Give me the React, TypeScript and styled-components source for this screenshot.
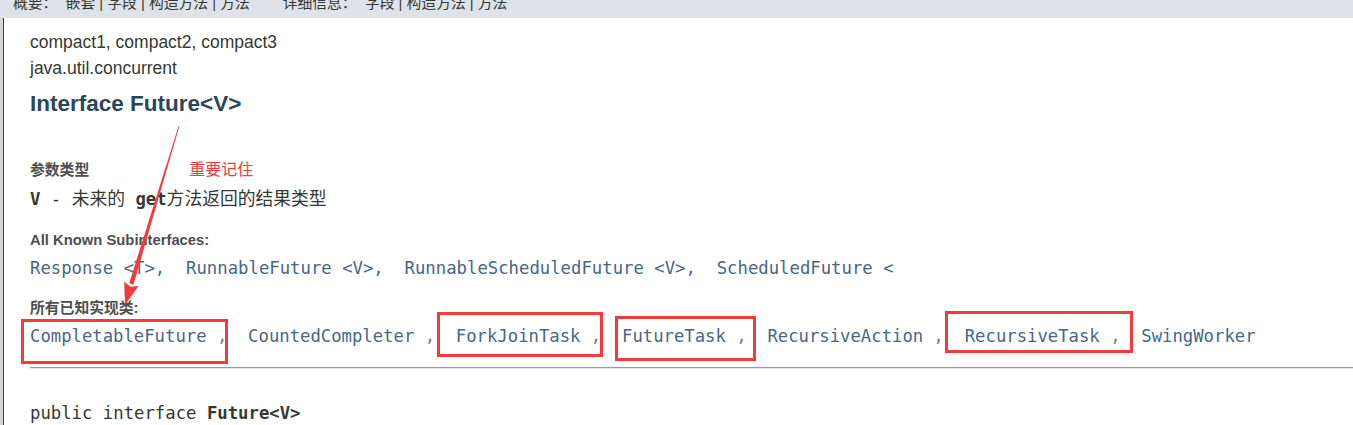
import React from "react";
import styled, { createGlobalStyle } from "styled-components";

const GlobalStyle = createGlobalStyle`
  html, body { margin: 0; padding: 0; background: #ffffff; }
  body {
    font-family: "Liberation Sans", Arial, "Noto Sans CJK SC", sans-serif;
    color: #353833;
  }
`;

const MONO = `"DejaVu Sans Mono", "Noto Sans CJK SC", monospace`;
const RED = "#f23b3b";

const Page = styled.div`
  position: relative;
  width: 1353px;
  height: 425px;
  overflow: hidden;
  display: flex;
  flex-direction: column;
`;

const TopBar = styled.div`
  height: 18px;
  flex-shrink: 0;
  background: #dee3e9;
  overflow: hidden;
  padding-left: 13px;
`;

const NavText = styled.div`
  margin-top: -7px;
  font-size: 14.8px;
  line-height: 20px;
  white-space: pre;
  color: #353833;
`;

const Body = styled.div`
  flex: 1;
  display: flex;
`;

const Edge = styled.div`
  width: 3px;
  flex-shrink: 0;
  background: #d6d6d6;
  border-right: 1px solid #3f3f3f;
`;

const Content = styled.div`
  flex: 1;
  padding-left: 26px;
  display: flex;
  flex-direction: column;
`;

const Line = styled.div<{ $mt: number }>`
  margin-top: ${(p) => p.$mt}px;
  font-size: 17.5px;
  line-height: 26px;
  white-space: nowrap;
`;

const Heading = styled.h1`
  margin: 8px 0 0;
  font-size: 22.5px;
  line-height: 30px;
  font-weight: bold;
  color: #2c4557;
`;

const LabelRow = styled.div<{ $mt: number }>`
  margin-top: ${(p) => p.$mt}px;
  display: flex;
  align-items: center;
  height: 20px;
`;

const Label = styled.div`
  font-size: 14.8px;
  font-weight: bold;
  color: #4e4e4e;
  line-height: 20px;
  white-space: nowrap;
`;

const Note = styled.span`
  margin-left: 100px;
  font-size: 16px;
  color: ${RED};
  line-height: 20px;
`;

const CodeLine = styled.div<{ $mt: number; $link?: boolean }>`
  margin-top: ${(p) => p.$mt}px;
  height: 24px;
  font-family: ${MONO};
  font-size: 17.3px;
  line-height: 24px;
  white-space: pre;
  color: ${(p) => (p.$link ? "#4a6782" : "#353833")};
`;

const Cjk = styled.span`
  font-family: "Noto Sans CJK SC", sans-serif;
  font-size: 17.8px;
  line-height: 1;
`;

const Strong = styled.b`
  font-weight: bold;
  color: #353833;
`;

const ImplRow = styled.div`
  margin-top: 6px;
  display: flex;
  font-family: ${MONO};
  font-size: 17.25px;
  line-height: 24px;
  white-space: pre;
  color: #4a6782;
`;

const Sep = styled.span`
  color: #6d7d8d;
`;

const Rule = styled.hr`
  margin: 19px 0 0;
  height: 0;
  border: none;
  border-top: 1px solid #9a9a9a;
  border-bottom: 1px solid #e9e9e9;
`;

const Overlay = styled.div`
  position: absolute;
  inset: 0;
  pointer-events: none;
`;

const MarkBox = styled.div`
  position: absolute;
  box-sizing: border-box;
  border: 3px solid ${RED};
`;

const ArrowSvg = styled.svg`
  position: absolute;
  left: 0;
  top: 0;
`;

const impls = [
  "CompletableFuture",
  "CountedCompleter",
  "ForkJoinTask",
  "FutureTask",
  "RecursiveAction",
  "RecursiveTask",
  "SwingWorker",
];

const boxes = [
  { l: 21, t: 319, r: 228, b: 364 },
  { l: 437, t: 312, r: 603, b: 357 },
  { l: 615, t: 316, r: 756, b: 361 },
  { l: 945, t: 311, r: 1133, b: 353 },
];

function Arrow() {
  const tail = { x: 179, y: 126 };
  const tip = { x: 125, y: 305 };
  const dx = tip.x - tail.x;
  const dy = tip.y - tail.y;
  const len = Math.hypot(dx, dy);
  const ux = dx / len;
  const uy = dy / len;
  const px = -uy;
  const py = ux;
  const headLen = 22;
  const bx = tip.x - ux * headLen;
  const by = tip.y - uy * headLen;
  const shaft = [
    [tail.x + px * 0.4, tail.y + py * 0.4],
    [bx + px * 2.2, by + py * 2.2],
    [bx - px * 2.2, by - py * 2.2],
    [tail.x - px * 0.4, tail.y - py * 0.4],
  ];
  const head = [
    [bx + px * 7.5, by + py * 7.5],
    [tip.x, tip.y],
    [bx - px * 7.5, by - py * 7.5],
    [bx + ux * 3, by + uy * 3],
  ];
  const pts = (a: number[][]) => a.map((p) => `${p[0].toFixed(1)},${p[1].toFixed(1)}`).join(" ");
  return (
    <ArrowSvg width="1353" height="425" viewBox="0 0 1353 425">
      <polygon points={pts(shaft)} fill={RED} />
      <polygon points={pts(head)} fill={RED} />
    </ArrowSvg>
  );
}

export default function App() {
  return (
    <>
      <GlobalStyle />
      <Page>
        <TopBar>
          <NavText>{"概要：  嵌套 | 字段 | 构造方法 | 方法        详细信息：  字段 | 构造方法 | 方法"}</NavText>
        </TopBar>
        <Body>
          <Edge />
          <Content>
            <Line $mt={11}>compact1, compact2, compact3</Line>
            <Line $mt={0}>java.util.concurrent</Line>
            <Heading>Interface Future&lt;V&gt;</Heading>
            <LabelRow $mt={41}>
              <Label>参数类型</Label>
              <Note>重要记住</Note>
            </LabelRow>
            <CodeLine $mt={7}>
              <Strong>V</Strong>
              {" - "}
              <Cjk>未来的</Cjk>
              {" "}
              <Strong>get</Strong>
              <Cjk>方法返回的结果类型</Cjk>
            </CodeLine>
            <LabelRow $mt={19}>
              <Label>All Known Subinterfaces:</Label>
            </LabelRow>
            <CodeLine $mt={6} $link>
              {"Response <T>,  RunnableFuture <V>,  RunnableScheduledFuture <V>,  ScheduledFuture <"}
            </CodeLine>
            <LabelRow $mt={18}>
              <Label>所有已知实现类:</Label>
            </LabelRow>
            <ImplRow>
              {impls.map((name, i) => (
                <span key={name}>
                  {name}
                  {i < impls.length - 1 && <Sep>{" ,  "}</Sep>}
                </span>
              ))}
            </ImplRow>
            <Rule />
            <CodeLine $mt={32}>
              {"public interface "}
              <Strong>Future&lt;V&gt;</Strong>
            </CodeLine>
          </Content>
        </Body>
        <Overlay>
          {boxes.map((b, i) => (
            <MarkBox
              key={i}
              style={{ left: b.l, top: b.t, width: b.r - b.l, height: b.b - b.t }}
            />
          ))}
          <Arrow />
        </Overlay>
      </Page>
    </>
  );
}
